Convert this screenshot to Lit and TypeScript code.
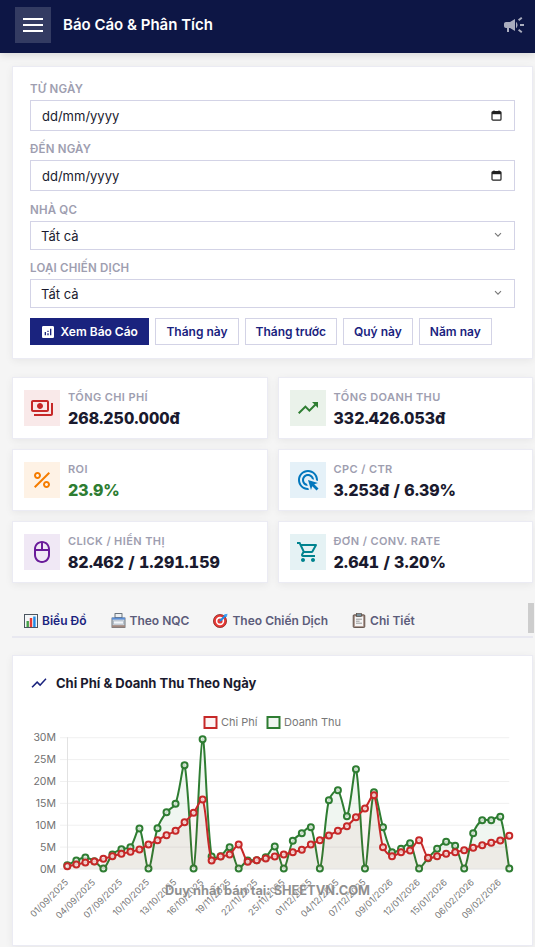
import { LitElement, html, css, svg } from "lit";
import { customElement } from "lit/decorators.js";

const ICONS: Record<string, string> = {
  payments: "M19 14V6c0-1.1-.9-2-2-2H3c-1.1 0-2 .9-2 2v8c0 1.1.9 2 2 2h14c1.1 0 2-.9 2-2zm-2 0H3V6h14v8zm-7-7c-1.66 0-3 1.34-3 3s1.34 3 3 3 3-1.34 3-3-1.34-3-3-3zm13 0v11c0 1.1-.9 2-2 2H4v-2h17V7h2z",
  trend: "M16 6l2.29 2.29-4.88 4.88-4-4L2 16.59 3.41 18l6-6 4 4 6.3-6.29L22 12V6z",
  percent: "M7.5 11C9.43 11 11 9.43 11 7.5S9.43 4 7.5 4 4 5.57 4 7.5 5.57 11 7.5 11zm0-5C8.33 6 9 6.67 9 7.5S8.33 9 7.5 9 6 8.33 6 7.5 6.67 6 7.5 6zM4.0025 18.5832 18.5832 4.0025l1.4142 1.4142L5.4167 19.9974zM16.5 13c-1.93 0-3.5 1.57-3.5 3.5s1.57 3.5 3.5 3.5 3.5-1.57 3.5-3.5-1.57-3.5-3.5-3.5zm0 5c-.83 0-1.5-.67-1.5-1.5s.67-1.5 1.5-1.5 1.5.67 1.5 1.5-.67 1.5-1.5 1.5z",
  ads: "M11.71 17.99C8.53 17.84 6 15.22 6 12c0-3.31 2.69-6 6-6 3.22 0 5.84 2.53 5.99 5.71l-2.1-.63C15.48 9.31 13.89 8 12 8c-2.21 0-4 1.79-4 4 0 1.89 1.31 3.48 3.08 3.89l.63 2.1zM22 12c0 .3-.01.6-.04.9l-1.97-.59c.01-.1.01-.21.01-.31 0-4.42-3.58-8-8-8s-8 3.58-8 8 3.58 8 8 8c.1 0 .21 0 .31-.01l.59 1.97c-.3.03-.6.04-.9.04-5.52 0-10-4.48-10-10S6.48 2 12 2s10 4.48 10 10zm-3.77 4.26L22 15l-10-3 3 10 1.26-3.77 4.27 4.27 1.98-1.98-4.28-4.26z",
  mouse: "M20 9c-.04-4.39-3.6-8-8-8s-7.96 3.61-8 8v6c0 4.42 3.58 8 8 8s8-3.58 8-8V9zm-2 0h-5V3.06c2.81.47 4.96 2.9 5 5.94zm-7-5.94V9H6c.04-3.04 2.19-5.47 5-5.94zM18 15c0 3.31-2.69 6-6 6s-6-2.69-6-6v-4h12v4z",
  cart: "M15.55 13c.75 0 1.41-.41 1.75-1.03l3.58-6.49c.37-.66-.11-1.48-.87-1.48H5.21l-.94-2H1v2h2l3.6 7.59-1.35 2.44C4.52 15.37 5.48 17 7 17h12v-2H7l1.1-2h7.45zM6.16 6h12.15l-2.76 5H8.53L6.16 6zM7 18c-1.1 0-1.99.9-1.99 2S5.9 22 7 22s2-.9 2-2-.9-2-2-2zm10 0c-1.1 0-1.99.9-1.99 2s.89 2 1.99 2 2-.9 2-2-.9-2-2-2z",
  campaign: "M18 11v2h4v-2h-4zm-2 6.61c.96.71 2.21 1.65 3.2 2.39.4-.53.8-1.07 1.2-1.6-.99-.74-2.24-1.68-3.2-2.4-.4.54-.8 1.08-1.2 1.61zM20.4 5.6c-.4-.53-.8-1.07-1.2-1.6-.99.74-2.24 1.68-3.2 2.4.4.53.8 1.07 1.2 1.6.96-.72 2.21-1.65 3.2-2.4zM4 9c-1.1 0-2 .9-2 2v2c0 1.1.9 2 2 2h1v4h2v-4h1l5 3V6L8 9H4zm11.5 3c0-1.33-.58-2.53-1.5-3.35v6.69c.92-.81 1.5-2.01 1.5-3.34z",
  analytics: "M19 3H5c-1.1 0-2 .9-2 2v14c0 1.1.9 2 2 2h14c1.1 0 2-.9 2-2V5c0-1.1-.9-2-2-2zM9 17H7v-5h2v5zm4 0h-2v-3h2v3zm0-5h-2v-2h2v2zm4 5h-2V7h2v10z",
  chart: "M3.5 18.49l6-6.01 4 4L22 6.92l-1.41-1.41-7.09 7.97-4-4L2 16.99z",
};

const icon = (name: string, size: number) => html`<svg class="mi" width=${size} height=${size} viewBox="0 0 24 24" fill="currentColor"><path d=${ICONS[name]}></path></svg>`;

const STATS = [
  { label: "Tổng Chi Phí", value: "268.250.000đ", icon: "payments", cls: "red" },
  { label: "Tổng Doanh Thu", value: "332.426.053đ", icon: "trend", cls: "green" },
  { label: "ROI", value: "23.9%", icon: "percent", cls: "orange", good: true },
  { label: "CPC / CTR", value: "3.253đ / 6.39%", icon: "ads", cls: "blue" },
  { label: "Click / Hiển Thị", value: "82.462 / 1.291.159", icon: "mouse", cls: "purple" },
  { label: "Đơn / Conv. Rate", value: "2.641 / 3.20%", icon: "cart", cls: "teal" },
];

const tabGlyphs = {
  bars: html`<svg width="14" height="14" viewBox="0 0 14 14"><rect x=".5" y=".5" width="13" height="13" fill="#f4f6f8" stroke="#4a5560"></rect><rect x="2.5" y="7" width="2.4" height="6" fill="#43a047"></rect><rect x="5.8" y="4" width="2.4" height="9" fill="#e53935"></rect><rect x="9.2" y="2.5" width="2.4" height="10.5" fill="#1e88e5"></rect></svg>`,
  store: html`<svg width="15" height="15" viewBox="0 0 15 15"><rect x="1" y="5" width="13" height="9.5" fill="#d5dae0" stroke="#4a5560" stroke-width=".8"></rect><rect x="4" y=".6" width="7" height="4" fill="#eceff1" stroke="#4a5560" stroke-width=".8"></rect><rect x="1" y="4.6" width="13" height="2" fill="#5c8fd6"></rect><rect x="2.6" y="8" width="9.8" height="3" fill="#f3f6fa" stroke="#8fa0b0" stroke-width=".5"></rect><rect x="1" y="12.2" width="13" height="2.3" fill="#a1887f"></rect></svg>`,
  target: html`<svg width="15" height="15" viewBox="0 0 15 15"><circle cx="7" cy="8" r="6.6" fill="#e53935" stroke="#7b1f1a" stroke-width=".7"></circle><circle cx="7" cy="8" r="4.2" fill="#fff"></circle><circle cx="7" cy="8" r="2.6" fill="#e53935"></circle><path d="M7 8 L13 2" stroke="#1e88e5" stroke-width="2"></path><path d="M11 1.5 L14.5 .8 L13.8 4.2 Z" fill="#42a5f5"></path></svg>`,
  clip: html`<svg width="14" height="15" viewBox="0 0 14 15"><rect x="1.2" y="1.8" width="11.6" height="12.7" rx="1" fill="#a1887f" stroke="#4e4037" stroke-width=".8"></rect><rect x="2.8" y="3.4" width="8.4" height="9.8" fill="#f5f5f5"></rect><rect x="4.4" y=".6" width="5.2" height="3" fill="#78909c" stroke="#4e4037" stroke-width=".6"></rect><path d="M4 6.2h6M4 8.2h3.6M4 10.2h6" stroke="#8d8d8d" stroke-width=".9"></path></svg>`,
};

const TABS = [
  { label: "Biểu Đồ", glyph: tabGlyphs.bars, active: true },
  { label: "Theo NQC", glyph: tabGlyphs.store },
  { label: "Theo Chiến Dịch", glyph: tabGlyphs.target },
  { label: "Chi Tiết", glyph: tabGlyphs.clip },
];

const COST = [0.53, 0.91, 1.37, 1.6, 2.21, 2.82, 3.35, 3.81, 4.34, 5.48, 6.47, 7.62, 8.61, 10.59, 12.72, 15.77, 1.83, 2.74, 3.2, 5.48, 1.52, 1.9, 2.28, 2.74, 3.2, 3.73, 4.27, 5.48, 6.47, 7.54, 8.61, 9.67, 11.73, 13.71, 16.76, 4.87, 2.82, 3.73, 4.11, 6.47, 2.44, 2.82, 3.35, 3.73, 4.19, 4.72, 5.33, 5.86, 6.4, 7.46];
const REV = [0.76, 1.83, 2.51, 1.68, 0, 3.2, 4.42, 4.87, 9.14, 0, 9.22, 12.87, 14.78, 23.6, 0, 29.55, 2.74, 2.82, 4.87, 0, 1.83, 1.9, 2.59, 5.03, 0, 6.32, 8.07, 9.44, 0, 15.61, 17.9, 11.96, 22.7, 0, 17.44, 9.44, 3.73, 4.49, 5.79, 0, 2.36, 4.49, 6.09, 5.18, 0, 8.07, 11.04, 11.04, 11.8, 0];
const DATES = ["01/09/2025", "04/09/2025", "07/09/2025", "10/10/2025", "13/10/2025", "16/10/2025", "19/11/2025", "22/11/2025", "25/11/2025", "01/12/2025", "04/12/2025", "07/12/2025", "09/01/2026", "12/01/2026", "15/01/2026", "06/02/2026", "09/02/2026"];

const X0 = 67.3, DX = 9.02, Y0 = 868.5, PER_M = 4.377;
const px = (i: number) => X0 + i * DX;
const py = (v: number) => Y0 - v * PER_M;

function spline(vals: number[]) {
  const pts = vals.map((v, i) => [px(i), py(v)]);
  const t = 0.3;
  const ctrl = pts.map((p, i) => {
    const a = pts[Math.max(i - 1, 0)], b = pts[Math.min(i + 1, pts.length - 1)];
    const d1 = Math.hypot(p[0] - a[0], p[1] - a[1]), d2 = Math.hypot(b[0] - p[0], b[1] - p[1]);
    const s = d1 + d2 || 1;
    const fa = (t * d1) / s, fb = (t * d2) / s;
    return {
      p: [Math.max(X0, p[0] - fa * (b[0] - a[0])), Math.min(Y0, p[1] - fa * (b[1] - a[1]))],
      n: [Math.min(px(vals.length - 1), p[0] + fb * (b[0] - a[0])), Math.min(Y0, p[1] + fb * (b[1] - a[1]))],
    };
  });
  let d = `M${pts[0][0]} ${pts[0][1]}`;
  for (let i = 1; i < pts.length; i++) {
    const c1 = ctrl[i - 1].n, c2 = ctrl[i].p;
    d += `C${c1[0].toFixed(2)} ${c1[1].toFixed(2)} ${c2[0].toFixed(2)} ${c2[1].toFixed(2)} ${pts[i][0].toFixed(2)} ${pts[i][1].toFixed(2)}`;
  }
  return d;
}

function series(vals: number[], cls: string) {
  const d = spline(vals);
  const area = `${d}L${px(vals.length - 1)} ${Y0}L${X0} ${Y0}Z`;
  return svg`<path class=${`area ${cls}`} d=${area}></path>
    <path class=${`line ${cls}`} d=${d}></path>
    ${vals.map((v, i) => svg`<circle class=${`pt ${cls}`} cx=${px(i)} cy=${py(v)} r="3"></circle>`)}`;
}

@customElement("daily-chart")
class DailyChart extends LitElement {
  static styles = css`
    :host { display: block; }
    svg { display: block; width: 100%; height: auto; font-family: Inter, "Noto Sans", sans-serif; }
    .grid { stroke: #f0f0f0; stroke-width: 1; }
    .axis { stroke: #e2e2e2; stroke-width: 1; }
    .tick { font-size: 10.5px; fill: #707070; }
    .tickx { font-size: 9px; fill: #777; }
    .legend { font-size: 11px; fill: #777; }
    .area { stroke: none; }
    .area.rev { fill: rgba(46, 125, 50, 0.07); }
    .area.cost { fill: rgba(198, 40, 40, 0.05); }
    .line { fill: none; stroke-width: 2; }
    .line.rev, .pt.rev { stroke: #2e7d32; }
    .line.cost, .pt.cost { stroke: #c62828; }
    .pt { stroke-width: 2; }
    .pt.rev { fill: rgba(236, 244, 236, 0.8); }
    .pt.cost { fill: rgba(250, 235, 235, 0.8); }
    .box { stroke-width: 2; }
    .box.cost { stroke: #c62828; fill: rgba(198, 40, 40, 0.05); }
    .box.rev { stroke: #2e7d32; fill: rgba(46, 125, 50, 0.07); }
    .mark { font-size: 12.8px; font-weight: 700; fill: rgba(130, 130, 130, 0.9); stroke: rgba(255, 255, 255, 0.55); stroke-width: 1px; paint-order: stroke; }
  `;
  render() {
    const ticks = [0, 5, 10, 15, 20, 25, 30];
    return html`<svg viewBox="13 710 519 235" role="img">
      <rect class="box cost" x="204.5" y="717" width="12" height="11"></rect>
      <text class="legend" x="221" y="726">Chi Phí</text>
      <rect class="box rev" x="267.5" y="717" width="12" height="11"></rect>
      <text class="legend" x="284" y="726">Doanh Thu</text>
      ${ticks.map((t) => svg`
        <line class=${t === 0 ? "axis" : "grid"} x1="60" x2=${px(49)} y1=${py(t) + 0.5} y2=${py(t) + 0.5}></line>
        <text class="tick" x="56" y=${py(t) + 4} text-anchor="end">${t}M</text>`)}
      <line class="axis" x1="67.5" x2="67.5" y1=${py(30)} y2=${Y0}></line>
      ${series(REV, "rev")}
      ${series(COST, "cost")}
      ${DATES.map((d, i) => svg`<text class="tickx" text-anchor="end" transform=${`translate(${px(i * 3) + 1.5} 883) rotate(-45)`}>${d}</text>`)}
      <text class="mark" x="267.5" y="895" text-anchor="middle">Duy nhất bán tại: SHEETVN.COM</text>
    </svg>`;
  }
}

@customElement("app-root")
export class AppRoot extends LitElement {
  static styles = css`
    :host { display: block; min-height: 947px; background: #f5f5f5; font-family: Inter, "Noto Sans", sans-serif; color: #1a1a2e; overflow: hidden; }
    * { box-sizing: border-box; }
    .mi { display: block; flex: none; }
    header { height: 53px; background: #0d1645; display: flex; align-items: center; padding: 0 9px 4px 15px; box-shadow: 0 2px 8px rgba(0, 0, 0, 0.12); }
    .menu { width: 36px; height: 36px; background: rgba(255, 255, 255, 0.16); display: flex; flex-direction: column; justify-content: center; align-items: center; gap: 4px; border: 0; padding: 0; }
    .menu span { display: block; width: 20px; height: 2px; background: #fff; }
    h1 { margin: 0 0 0 12px; flex: 1; font-size: 15px; font-weight: 600; color: #fff; }
    .bell { color: rgba(255, 255, 255, 0.65); }
    main { padding: 13px 2px 0 12px; display: flex; flex-direction: column; }
    .card { background: #fff; border: 1px solid #ebebf3; box-shadow: 0 2px 8px rgba(0, 0, 0, 0.06); }
    .filters { padding: 15px 17px 13px 17px; display: flex; flex-direction: column; }
    .field { display: flex; flex-direction: column; margin-bottom: 11px; }
    .field:nth-child(2) { margin-bottom: 12px; }
    .field:nth-child(4) { margin-bottom: 10px; }
    label { font-size: 11.5px; line-height: 15px; font-weight: 600; color: #9e9eb0; text-transform: uppercase; margin-bottom: 3px; letter-spacing: 0.2px; }
    input, select { font: 400 13px Inter, "Noto Sans", sans-serif; color: #1a1a2e; background: #fff; border: 1px solid #d3d3e6; border-radius: 0; padding: 0 11px; width: 100%; outline: none; display: block; }
    select { padding: 0 10px; }
    input { height: 31px; }
    select { height: 29px; appearance: none; }
    .wrap { position: relative; }
    .chev { position: absolute; right: 13px; top: 11px; pointer-events: none; }
    .cal { position: absolute; right: 13px; top: 10px; pointer-events: none; }
    .actions { display: flex; gap: 6px; }
    button.btn { height: 27px; font: 600 12px Inter, "Noto Sans", sans-serif; background: #fff; color: #1a237e; border: 1px solid #d3d3e6; padding: 0 10px; display: flex; align-items: center; gap: 5px; border-radius: 0; white-space: nowrap; }
    button.primary { background: #1a237e; color: #fff; border-color: #1a237e; padding: 0 10.5px 0 8.5px; }
    .stats { display: grid; grid-template-columns: repeat(2, 1fr); gap: 10px; margin-top: 18px; }
    .stat { display: flex; align-items: center; gap: 8px; height: 62px; padding: 0 11px; }
    .tile { width: 36px; height: 36px; display: flex; align-items: center; justify-content: center; flex: none; }
    .red { background: rgba(198, 40, 40, 0.1); color: #c62828; }
    .green { background: rgba(46, 125, 50, 0.1); color: #2e7d32; }
    .orange { background: rgba(245, 124, 0, 0.1); color: #f57c00; }
    .blue { background: rgba(2, 119, 189, 0.1); color: #0277bd; }
    .purple { background: rgba(106, 27, 154, 0.1); color: #6a1b9a; }
    .teal { background: rgba(0, 131, 143, 0.1); color: #00838f; }
    .stat-text { margin-top: 3px; }
    .stat-label { font-size: 11px; line-height: 14px; font-weight: 600; color: #9e9eb0; text-transform: uppercase; letter-spacing: 0.4px; }
    .stat-value { font-size: 16px; line-height: 22px; font-weight: 800; color: #1a1a2e; margin-top: 3px; font-variant-numeric: tabular-nums; }
    .stat-value.good { color: #2e7d32; }
    .tabs { position: relative; display: flex; margin-top: 21px; height: 34px; border-bottom: 2px solid #e8e8f0; }
    .tab { display: flex; align-items: center; gap: 4px; padding: 1px 12px 0; font-size: 12px; font-weight: 600; color: #5c5c7a; }
    .tab.active { color: #1a237e; }
    .thumb { position: absolute; right: -1px; top: -1px; width: 6px; height: 30px; background: #cdcdcd; }
    .chart-card { margin-top: 17px; height: 291px; }
    .chart-title { height: 54px; display: flex; align-items: center; gap: 8px; padding: 0 0 0 17px; font-size: 13px; font-weight: 700; color: #1a1a2e; }
    .chart-title .mi { color: #1a237e; }
  `;
  render() {
    const chev = html`<svg class="chev" width="8" height="6" viewBox="0 0 8 6" fill="none" stroke="#777" stroke-width="1.1"><path d="M1 1.2 4 4.2l3-3"></path></svg>`;
    const cal = html`<svg class="cal" width="11" height="11" viewBox="0 0 11 11" fill="none"><rect x="1" y="1.6" width="9" height="8.6" rx="1" stroke="#222" stroke-width="1.2"></rect><rect x="1" y="2" width="9" height="2.2" fill="#222"></rect><path d="M3 .4v1.6M8 .4v1.6" stroke="#222" stroke-width="1"></path></svg>`;
    return html`
      <header>
        <div class="menu"><span></span><span></span><span></span></div>
        <h1>Báo Cáo &amp; Phân Tích</h1>
        <span class="bell">${icon("campaign", 24)}</span>
      </header>
      <main>
        <section class="card filters">
          <div class="field"><label>Từ Ngày</label><div class="wrap"><input type="text" value="dd/mm/yyyy" />${cal}</div></div>
          <div class="field"><label>Đến Ngày</label><div class="wrap"><input type="text" value="dd/mm/yyyy" />${cal}</div></div>
          <div class="field"><label>Nhà QC</label><div class="wrap"><select><option>Tất cả</option></select>${chev}</div></div>
          <div class="field"><label>Loại Chiến Dịch</label><div class="wrap"><select><option>Tất cả</option></select>${chev}</div></div>
          <div class="actions">
            <button class="btn primary">${icon("analytics", 16)}Xem Báo Cáo</button>
            <button class="btn">Tháng này</button>
            <button class="btn">Tháng trước</button>
            <button class="btn">Quý này</button>
            <button class="btn">Năm nay</button>
          </div>
        </section>
        <section class="stats">
          ${STATS.map((s) => html`<div class="card stat">
            <div class="tile ${s.cls}">${icon(s.icon, 24)}</div>
            <div class="stat-text"><div class="stat-label">${s.label}</div><div class="stat-value ${s.good ? "good" : ""}">${s.value}</div></div>
          </div>`)}
        </section>
        <nav class="tabs">
          ${TABS.map((t) => html`<div class="tab ${t.active ? "active" : ""}">${t.glyph}<span>${t.label}</span></div>`)}
          <div class="thumb"></div>
        </nav>
        <section class="card chart-card">
          <div class="chart-title">${icon("chart", 18)}Chi Phí &amp; Doanh Thu Theo Ngày</div>
          <daily-chart></daily-chart>
        </section>
      </main>
    `;
  }
}
